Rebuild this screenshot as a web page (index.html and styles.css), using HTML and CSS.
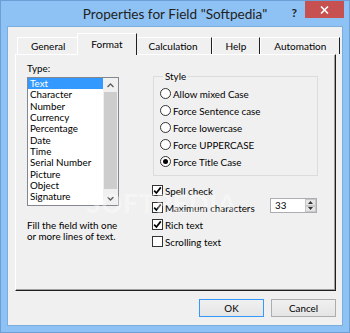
FILE: index.html
```html
<!DOCTYPE html>
<html lang="en">
<head>
  <meta charset="UTF-8" />
  <title>Properties for Field "Softpedia"</title>
  <link rel="stylesheet" href="styles.css">
</head>
<body>
<div class="window">
  <div class="titlebar">
    <div class="title">Properties for Field "Softpedia"</div>
    <div class="help">?</div>
    <div class="close">
      <svg width="9" height="8" viewBox="0 0 9 8"><path d="M1 0.5 L8 7.5 M8 0.5 L1 7.5" stroke="#fff" stroke-width="1.6"/></svg>
    </div>
  </div>

  <div class="client">
    <div class="tabs">
      <div class="tab">General</div>
      <div class="tab active">Format</div>
      <div class="tab">Calculation</div>
      <div class="tab">Help</div>
      <div class="tab">Automation</div>
    </div>

    <div class="panel">
      <div class="col-left">
        <div class="label">Type:</div>
        <div class="listbox">
          <ul class="items">
            <li class="selected">Text</li>
            <li>Character</li>
            <li>Number</li>
            <li>Currency</li>
            <li>Percentage</li>
            <li>Date</li>
            <li>Time</li>
            <li>Serial Number</li>
            <li>Picture</li>
            <li>Object</li>
            <li>Signature</li>
          </ul>
          <div class="scrollbar">
            <div class="arrow">
              <svg width="7" height="5" viewBox="0 0 7 5"><path d="M0.5 4 L3.5 1 L6.5 4" fill="none" stroke="#606060" stroke-width="1.4"/></svg>
            </div>
            <div class="track"><div class="thumb"></div></div>
            <div class="arrow">
              <svg width="7" height="5" viewBox="0 0 7 5"><path d="M0.5 1 L3.5 4 L6.5 1" fill="none" stroke="#606060" stroke-width="1.4"/></svg>
            </div>
          </div>
        </div>
        <p class="hint">Fill the field with one<br>or more lines of text.</p>
      </div>

      <div class="col-right">
        <fieldset class="group">
          <legend>Style</legend>
          <div class="opt"><span class="radio"></span>Allow mixed Case</div>
          <div class="opt"><span class="radio"></span>Force Sentence case</div>
          <div class="opt"><span class="radio"></span>Force lowercase</div>
          <div class="opt"><span class="radio"></span>Force UPPERCASE</div>
          <div class="opt"><span class="radio on"></span>Force Title Case</div>
        </fieldset>

        <div class="checks">
          <div class="opt"><span class="check on"><svg width="9" height="9" viewBox="0 0 9 9"><path d="M1.2 4.6 L3.4 7 L7.8 1.4" fill="none" stroke="#000" stroke-width="1.7"/></svg></span>Spell check</div>
          <div class="opt">
            <span class="check on"><svg width="9" height="9" viewBox="0 0 9 9"><path d="M1.2 4.6 L3.4 7 L7.8 1.4" fill="none" stroke="#000" stroke-width="1.7"/></svg></span>Maximum characters
            <div class="spin">
              <span class="spin-value">33</span>
              <div class="spin-btns">
                <div class="spin-btn"><svg width="5" height="3" viewBox="0 0 5 3"><path d="M0 3 L2.5 0 L5 3 Z" fill="#333"/></svg></div>
                <div class="spin-btn"><svg width="5" height="3" viewBox="0 0 5 3"><path d="M0 0 L2.5 3 L5 0 Z" fill="#333"/></svg></div>
              </div>
            </div>
          </div>
          <div class="opt"><span class="check on"><svg width="9" height="9" viewBox="0 0 9 9"><path d="M1.2 4.6 L3.4 7 L7.8 1.4" fill="none" stroke="#000" stroke-width="1.7"/></svg></span>Rich text</div>
          <div class="opt"><span class="check"></span>Scrolling text</div>
        </div>
      </div>

      <div class="watermark">SOFTPEDIA</div>
    </div>

    <div class="buttons">
      <button class="btn default">OK</button>
      <button class="btn">Cancel</button>
    </div>
  </div>
</div>
</body>
</html>
```

FILE: styles.css
```css
body {
  margin: 0;
  font-family: Lato, "Open Sans", sans-serif;
  font-size: 9.8px;
  color: #000;
}
.window {
  width: 350px;
  height: 333px;
  box-sizing: border-box;
  background: #8ec2f4;
  border: 1px solid #6d9fd6;
  display: flex;
  flex-direction: column;
}
.titlebar {
  height: 25px;
  position: relative;
  display: flex;
  align-items: center;
  justify-content: center;
}
.title {
  font-size: 13.6px;
  color: #222;
}
.help {
  position: absolute;
  right: 52px;
  top: 4px;
  font-weight: bold;
  font-size: 12px;
  color: #222;
}
.close {
  position: absolute;
  right: 5px;
  top: 0;
  width: 39px;
  height: 17px;
  background: #c75050;
  display: flex;
  align-items: center;
  justify-content: center;
}
.client {
  flex: 1;
  margin: 0 6px 6px 6px;
  border: 1px solid #7aaedf;
  background: #f0f0f0;
  display: flex;
  flex-direction: column;
}

/* tabs */
.tabs {
  display: flex;
  align-items: flex-end;
  height: 21px;
  margin: 6px 0 0 9px;
  position: relative;
  z-index: 1;
  font-size: 10px;
}
.tab {
  height: 17px;
  line-height: 16px;
  padding: 0 13px;
  box-sizing: border-box;
  border: 1px solid;
  border-color: #fff #202020 transparent #fff;
  border-bottom: none;
  background: #f0f0f0;
  white-space: nowrap;
}
.tab.active {
  height: 22px;
  line-height: 20px;
  margin: 0 -2px -1px;
  position: relative;
  z-index: 2;
}

/* page */
.panel {
  height: 237px;
  margin: 0 6px 0 7px;
  box-sizing: border-box;
  border: 1px solid;
  border-color: #fff #202020 #202020 #fff;
  box-shadow: inset -1px -1px 0 #a0a0a0;
  padding: 7px 0 0 11px;
  display: flex;
  position: relative;
}
.col-left {
  width: 92px;
}
.label {
  line-height: 12px;
  margin-bottom: 3px;
}
.listbox {
  height: 129px;
  box-sizing: border-box;
  border: 1px solid #828790;
  background: #fff;
  display: flex;
}
.items {
  list-style: none;
  margin: 0;
  padding: 0;
  flex: 1;
  overflow: hidden;
}
.items li {
  line-height: 11.33px;
  padding-left: 2px;
  white-space: nowrap;
}
.items li.selected {
  background: #3399ff;
  color: #fff;
}
.scrollbar {
  width: 15px;
  display: flex;
  flex-direction: column;
  background: #f0f0f0;
}
.arrow {
  height: 14px;
  display: flex;
  align-items: center;
  justify-content: center;
}
.track {
  flex: 1;
  padding: 0 1px;
}
.thumb {
  height: 97px;
  background: #cdcdcd;
}
.hint {
  margin: 14px 0 0;
  line-height: 11px;
  white-space: nowrap;
}

.col-right {
  width: 166px;
  margin-left: 33px;
  padding-top: 8px;
}
.group {
  width: 165px;
  box-sizing: border-box;
  margin: 0 0 0 1px;
  padding: 3px 0 5px 6px;
  border: 1px solid #dcdcdc;
}
.group legend {
  padding: 0 2px;
  margin-left: 3px;
  line-height: 12px;
}
.opt {
  display: flex;
  align-items: center;
  height: 17px;
  gap: 2px;
  white-space: nowrap;
}
.radio {
  width: 11px;
  height: 11px;
  box-sizing: border-box;
  border: 1px solid #333;
  border-radius: 50%;
  background: #fff;
  display: flex;
  align-items: center;
  justify-content: center;
}
.radio.on::after {
  content: "";
  width: 5px;
  height: 5px;
  border-radius: 50%;
  background: #000;
}
.checks {
  margin-top: 6px;
}
.check {
  width: 11px;
  height: 11px;
  box-sizing: border-box;
  border: 1px solid #333;
  background: #fff;
  display: flex;
  align-items: center;
  justify-content: center;
}
.spin {
  margin: -1px 1px 0 auto;
  align-self: flex-start;
  width: 47px;
  height: 15px;
  box-sizing: border-box;
  border: 1px solid #abadb3;
  background: #fff;
  display: flex;
}
.spin-value {
  flex: 1;
  padding-left: 4px;
  line-height: 13px;
}
.spin-btns {
  width: 11px;
  display: flex;
  flex-direction: column;
}
.spin-btn {
  flex: 1;
  background: #e6e6e6;
  border: 1px solid #c8c8c8;
  display: flex;
  align-items: center;
  justify-content: center;
}
.watermark {
  position: absolute;
  left: 70px;
  top: 132px;
  font-size: 26px;
  font-weight: bold;
  letter-spacing: 1px;
  color: rgba(255, 255, 255, 0.4);
}

/* dialog buttons */
.buttons {
  display: flex;
  justify-content: flex-end;
  gap: 7px;
  margin: 8px 6px 0 0;
}
.btn {
  width: 65px;
  height: 18px;
  padding: 0;
  font: inherit;
  color: #000;
  border: 1px solid #adadad;
  background: linear-gradient(#f0f0f0, #e5e5e5);
}
.btn.default {
  border-color: #3399ff;
}
```
